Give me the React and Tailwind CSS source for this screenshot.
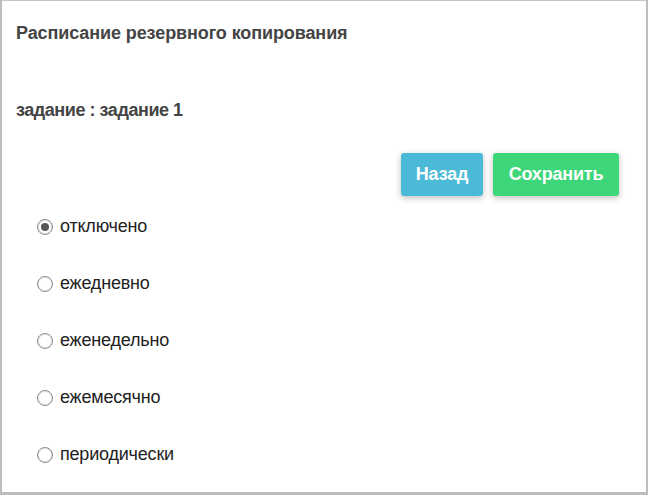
import { useState } from 'react';

const options = [
  { id: 'off', label: 'отключено' },
  { id: 'daily', label: 'ежедневно' },
  { id: 'weekly', label: 'еженедельно' },
  { id: 'monthly', label: 'ежемесячно' },
  { id: 'periodic', label: 'периодически' }
];

export default function App() {
  const [mode, setMode] = useState('off');

  return (
    <div className="h-[495px] w-[648px] overflow-hidden bg-white font-['Liberation_Sans',Arial,sans-serif]">
      <div className="h-full border-t border-l-2 border-r-2 border-b-[3px] border-[#bdbdbd] border-t-[#c4c4c4]">
        <div className="px-[14px]">
          <h2 className="pt-[21px] text-[18px] font-bold leading-[22px] tracking-[-0.1px] text-[#444]">
            Расписание резервного копирования
          </h2>
          <h3 className="mt-[55px] text-[18px] font-bold leading-[22px] tracking-[-0.45px] text-[#444]">
            задание : задание 1
          </h3>

          <div className="mt-[32px] flex justify-end gap-[10px] pr-[13px]">
            <button className="h-[43px] w-[82px] rounded-[3px] bg-[#4bbad6] text-[18px] font-bold tracking-[-0.2px] text-white shadow-[0_2px_6px_rgba(0,0,0,0.25)]">
              Назад
            </button>
            <button className="h-[43px] w-[126px] rounded-[3px] bg-[#3dd679] text-[18px] font-bold tracking-[-0.2px] text-white shadow-[0_2px_6px_rgba(0,0,0,0.25)]">
              Сохранить
            </button>
          </div>

          <div className="mt-[2px] flex flex-col pl-[21px]">
            {options.map((o) => (
              <label
                key={o.id}
                className="flex h-[57px] items-center gap-[7px] text-[18px] tracking-[-0.2px] text-[#222]"
              >
                <input
                  type="radio"
                  name="schedule"
                  checked={mode === o.id}
                  onChange={() => setMode(o.id)}
                  className="m-0 grid h-[16px] w-[16px] shrink-0 appearance-none place-items-center rounded-full border border-[#8a8a8a] bg-white shadow-[inset_0_0_0_1px_#e6e6e6] before:h-[8px] before:w-[8px] before:rounded-full before:bg-[#555] before:opacity-0 before:content-[''] checked:before:opacity-100"
                />
                {o.label}
              </label>
            ))}
          </div>
        </div>
      </div>
    </div>
  );
}
